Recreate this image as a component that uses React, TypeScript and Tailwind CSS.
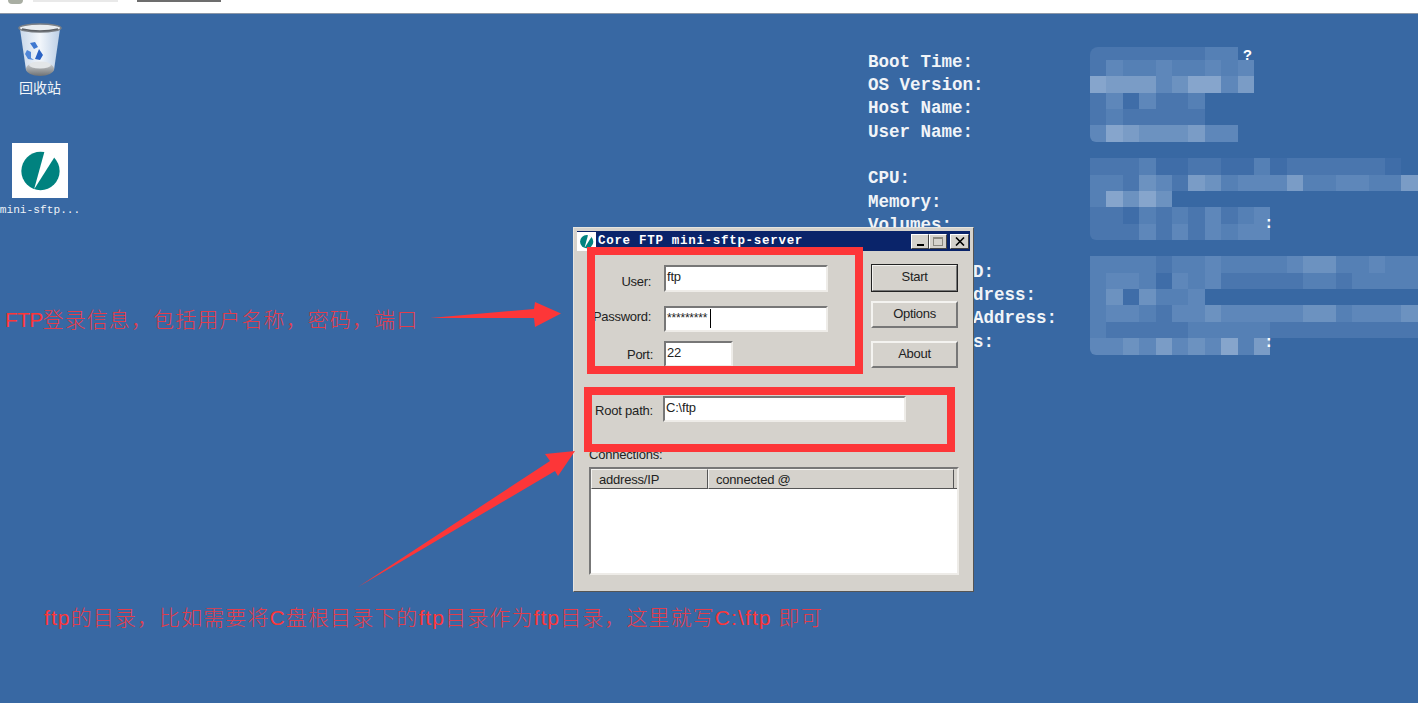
const sans = "[font-family:'Liberation_Sans',Arial,sans-serif]";
const mono = "[font-family:'Liberation_Mono','Courier_New',monospace]";
const cjk = "[font-family:'Liberation_Sans','Noto_Sans_CJK_SC',sans-serif]";

// mosaic shades, written out so that Tailwind sees every class
const shades = [
  "bg-[#3f6da8]",
  "bg-[#4a76ae]",
  "bg-[#5580b5]",
  "bg-[#5e87ba]",
  "bg-[#6c92c0]",
  "bg-[#7a9cc6]",
  "bg-[#86a5cc]",
];

const mosaicBlocks = [
  ["111111122", "1322322323", "6555346635", "1303112", "1211111", "365444533"],
  ["1112001100201111110", "22143154233352233225", "26464", "11021213123", "11131313233"],
  [
    "22221223222234422322",
    "23320323111112212222",
    "2404223",
    "23321334333334423334",
    "21111122222111111111",
    "33435343625",
  ],
];

const infoLines = [
  "Boot Time:",
  "OS Version:",
  "Host Name:",
  "User Name:",
  "",
  "CPU:",
  "Memory:",
  "Volumes:",
  "",
];
const infoTail = ["D:", "dress:", "Address:", "s:"];

function Mosaic() {
  return (
    <div className="relative flex flex-col gap-[16.5px]">
      {mosaicBlocks.map((rows, b) => (
        <div key={b} className="flex flex-col">
          {rows.map((row, r) => (
            <div
              key={r}
              className={`flex overflow-hidden ${b === 0 && r === 0 ? "h-[13px] rounded-t-[8px]" : "h-[16.35px]"} ${
                r === rows.length - 1 ? "rounded-b-[6px]" : ""
              }`}
            >
              {row.split("").map((c, i) => (
                <div key={i} className={`h-full w-[16.4px] shrink-0 ${shades[Number(c)]}`} />
              ))}
            </div>
          ))}
        </div>
      ))}
      <span className={`absolute left-[153px] top-[0px] text-[15px] font-bold leading-5 text-white ${mono}`}>?</span>
      <span className={`absolute left-[174px] top-[167px] text-[16px] font-bold leading-5 text-white ${mono}`}>:</span>
      <span className={`absolute left-[174px] top-[286px] text-[16px] font-bold leading-5 text-white ${mono}`}>:</span>
    </div>
  );
}

function BgInfo() {
  return (
    <div className="absolute left-[868px] top-[47px] flex">
      <div className={`w-[222px] pt-[3.5px] text-[17.5px] font-bold leading-[23.35px] text-[#f1f4f8] ${mono}`}>
        {infoLines.map((l, i) => (
          <div key={i} className="h-[23.35px] whitespace-pre">{l}</div>
        ))}
        {infoTail.map((l) => (
          <div key={l} className="h-[23.35px] whitespace-pre pl-[105px]">{l}</div>
        ))}
      </div>
      <Mosaic />
    </div>
  );
}

function RecycleBin() {
  return (
    <svg viewBox="0 0 44 56" className="h-[56px] w-[44px]">
      <defs>
        <linearGradient id="binBody" x1="0" x2="1" y1="0" y2="0">
          <stop offset="0" stopColor="#c9d8ea" />
          <stop offset="0.5" stopColor="#f2f6fb" />
          <stop offset="1" stopColor="#bccfe6" />
        </linearGradient>
        <linearGradient id="binBase" x1="0" x2="0" y1="0" y2="1">
          <stop offset="0" stopColor="#d5d8da" />
          <stop offset="1" stopColor="#6f7274" />
        </linearGradient>
      </defs>
      <path d="M2 7 L8 48 Q22 56 36 48 L42 7 Z" fill="url(#binBody)" />
      <ellipse cx="22" cy="47" rx="14" ry="7" fill="url(#binBase)" />
      <ellipse cx="22" cy="43" rx="11" ry="3.5" fill="#e3e6e8" />
      <ellipse cx="22" cy="6" rx="21" ry="4" fill="#e8ecef" stroke="#7c8086" strokeWidth="1.6" />
      <path d="M4 7 Q22 11 40 7" fill="none" stroke="#5d6166" strokeWidth="1.4" />
      <path d="M12 21 L17 20 L20 25 L16 27 Z" fill="#3f78d0" />
      <path d="M21 27 L25 33 L22 38 L17 37 L19 32 Z" fill="#2a62c4" />
      <path d="M9 28 L13 30 L13 36 L16 38 L10 37 L7 32 Z" fill="#4f86d8" />
    </svg>
  );
}

function SftpLogo({ size }: { size: string }) {
  return (
    <svg viewBox="0 0 56 56" className={`${size} bg-white`}>
      <circle cx="28.5" cy="28.5" r="19.5" fill="#00827f" />
      <path d="M33 7 L43 14 L22 47 Z" fill="#fff" />
    </svg>
  );
}

function Field({ w, h, children }: { w: string; h: string; children?: React.ReactNode }) {
  return (
    <div
      className={`${w} ${h} relative shrink-0 border-2 border-t-[#777] border-l-[#777] border-r-[#eeece8] border-b-[#eeece8] bg-white pl-[1px] text-[13px] leading-[20px] tracking-[-0.2px] text-[#222]`}
    >
      {children}
    </div>
  );
}

function WinButton({ label, def, h }: { label: string; def?: boolean; h: string }) {
  return (
    <div
      className={`${h} flex w-[87px] items-center justify-center border-2 border-t-[#f4f3f0] border-l-[#f4f3f0] border-r-[#777] border-b-[#777] pb-[2px] text-[13px] tracking-[-0.3px] text-[#222] ${
        def ? "outline outline-1 -outline-offset-1 outline-[#222]" : ""
      }`}
    >
      {label}
    </div>
  );
}

function CaptionButton({ children, w, ml }: { children: React.ReactNode; w: string; ml?: string }) {
  return (
    <div
      className={`flex h-[15px] ${w} items-center justify-center border border-t-white border-l-white border-r-[#444] border-b-[#444] bg-[#d5d2cc] ${ml ?? ""}`}
    >
      {children}
    </div>
  );
}

function FtpWindow() {
  return (
    <div className={`absolute left-[573px] top-[227px] flex h-[365px] w-[401px] flex-col border border-t-[#e6e4df] border-l-[#e6e4df] border-r-[#555] border-b-[#555] bg-[#d5d2cc] p-[3px] ${sans}`}>
      <div className="flex h-[20px] shrink-0 items-center bg-[#0a246a] pr-[1px]">
        <SftpLogo size="h-[19px] w-[19px] shrink-0" />
        <span className={`ml-[2px] text-[12.5px] font-bold tracking-[0.7px] text-white ${mono}`}>
          Core FTP mini-sftp-server
        </span>
        <div className="ml-auto flex items-center">
          <CaptionButton w="w-[18px]">
            <div className="mt-[7px] h-[2px] w-[7px] bg-black" />
          </CaptionButton>
          <CaptionButton w="w-[18px]">
            <div className="h-[9px] w-[10px] border border-t-2 border-[#8a8880]" />
          </CaptionButton>
          <CaptionButton w="w-[19px]" ml="ml-[3px]">
            <svg viewBox="0 0 10 9" className="h-[9px] w-[10px]">
              <path d="M1 0.5 L9 8.5 M9 0.5 L1 8.5" stroke="#000" strokeWidth="1.6" />
            </svg>
          </CaptionButton>
        </div>
      </div>

      <div className="flex pl-[13px] pt-[13px] text-[13px] tracking-[-0.3px] text-[#222]">
        <div className="w-[238px]">
          <div className="mt-[1px] flex h-[27px]">
            <span className="w-[61px] pt-[7px] text-right">User:</span>
            <div className="ml-[13px]">
              <Field w="w-[164px]" h="h-[27px]">ftp</Field>
            </div>
          </div>
          <div className="mt-[14px] flex h-[26px]">
            <span className="-ml-[3px] w-[64px] whitespace-nowrap pt-[1px] text-right">Password:</span>
            <div className="ml-[13px]">
              <Field w="w-[164px]" h="h-[26px]">
                <span className="text-[12px] leading-[20px]">*********</span>
                <span className="absolute left-[44px] top-[1px] h-[19px] w-px bg-black" />
              </Field>
            </div>
          </div>
          <div className="mt-[9px] flex h-[26px]">
            <span className="w-[63px] pt-[4px] text-right">Port:</span>
            <div className="ml-[11px]">
              <Field w="w-[69px]" h="h-[26px]">22</Field>
            </div>
          </div>
        </div>
        <div className="ml-[43px] flex flex-col">
          <WinButton label="Start" def h="h-[28px]" />
          <div className="mt-[9px]"><WinButton label="Options" h="h-[27px]" /></div>
          <div className="mt-[13px]"><WinButton label="About" h="h-[27px]" /></div>
        </div>
      </div>

      <div className="mt-[28px] flex pl-[18px] text-[13px] tracking-[-0.2px] text-[#222]">
        <span className="w-[68px] whitespace-nowrap pt-[5px]">Root path:</span>
        <Field w="w-[243px]" h="h-[26px]">C:\ftp</Field>
      </div>

      <div className="mt-[25px] pl-[12px] text-[13px] leading-[15px] tracking-[-0.2px] text-[#222]">Connections:</div>

      <div className="ml-[12px] mt-[5px] flex h-[108px] w-[370px] flex-col border-2 border-t-[#777] border-l-[#777] border-r-[#eeece8] border-b-[#eeece8] bg-white">
        <div className="flex h-[20px] shrink-0 bg-[#d5d2cc] text-[13px] leading-[19px] tracking-[-0.2px] text-[#222]">
          <div className="w-[117px] border border-t-[#f4f3f0] border-l-[#f4f3f0] border-r-[#555] border-b-[#555] pl-[7px]">address/IP</div>
          <div className="w-[246px] border border-t-[#f4f3f0] border-l-[#f4f3f0] border-r-[#555] border-b-[#555] pl-[7px]">connected @</div>
          <div className="flex-1 border-b border-b-[#555]" />
        </div>
      </div>
    </div>
  );
}

export default function App() {
  return (
    <div className="relative h-[703px] w-[1418px] overflow-hidden bg-[#3868a3]">
      {/* cropped strip of the remote desktop's title bar */}
      <div className="relative h-[14px] border-b border-b-[#8b97a8] bg-white">
        <div className="absolute left-[8px] top-0 h-[4px] w-[15px] rounded-b-full bg-[#a9aea3]" />
        <div className="absolute left-[33px] top-0 h-[2px] w-[85px] bg-[#e9e9e9]" />
        <div className="absolute left-[137px] top-0 h-[2px] w-[84px] bg-[#6d6d6d]" />
      </div>

      <div className="absolute left-[18px] top-[22px] flex w-[44px] flex-col items-center">
        <RecycleBin />
        <span className={`mt-[1px] whitespace-nowrap text-[14px] leading-[18px] text-[#f2f5f9] ${cjk}`}>回收站</span>
      </div>

      <div className="absolute left-[0px] top-[143px] flex w-[80px] flex-col items-center">
        <SftpLogo size="h-[55px] w-[56px]" />
        <span className={`mt-[3px] whitespace-nowrap text-[11.2px] leading-[18px] text-[#eef2f7] ${mono}`}>mini-sftp...</span>
      </div>

      <BgInfo />
      <FtpWindow />

      {/* annotations drawn over the screenshot */}
      <div className="absolute left-[587px] top-[247px] h-[127px] w-[276px] border-[8px] border-[#fd3638]" />
      <div className="absolute left-[584px] top-[387px] h-[65px] w-[371px] border-[8px] border-[#fd3638]" />

      <svg viewBox="0 0 1418 703" className="pointer-events-none absolute left-0 top-0 h-[703px] w-[1418px]">
        <polygon points="430,318 534,309 535,302 561,313.5 535,327 534,318" fill="#fd3638" />
        <polygon points="358,587 550,461 545,454 575,451 558,476 555,471" fill="#fd3638" />
      </svg>

      <div className={`absolute left-[5px] top-[305px] whitespace-nowrap text-[21px] font-light leading-[30px] tracking-[1.1px] text-[#e23d4c] ${cjk}`}>
        <span className="font-normal tracking-[-0.7px] text-[#fd3638]">FTP</span>
        登录信息，包括用户名称，密码，端口
      </div>
      <div className={`absolute left-[44px] top-[603px] whitespace-nowrap text-[21px] font-light leading-[30px] tracking-[1.1px] text-[#e23d4c] ${cjk}`}>
        <span className="font-normal text-[#fd3638]">ftp</span>的目录，比如需要将<span className="font-normal text-[#fd3638]">C</span>盘根目录下的<span className="font-normal text-[#fd3638]">ftp</span>目录作为<span className="font-normal text-[#fd3638]">ftp</span>目录，这里就写<span className="font-normal text-[#fd3638]">C:\ftp</span> 即可
      </div>
    </div>
  );
}
